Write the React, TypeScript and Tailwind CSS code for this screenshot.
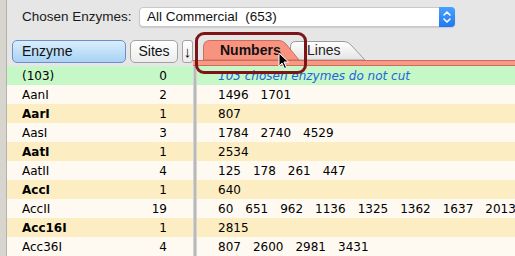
import React from "react";

type Row = { name: string; sites: string; nums: string[]; bold?: boolean; kind: "g" | "c" | "t"; note?: string };

const rows: Row[] = [
  { name: "(103)", sites: "0", nums: [], kind: "g", note: "103 chosen enzymes do not cut" },
  { name: "AanI", sites: "2", nums: ["1496", "1701"], kind: "c" },
  { name: "AarI", sites: "1", nums: ["807"], kind: "t", bold: true },
  { name: "AasI", sites: "3", nums: ["1784", "2740", "4529"], kind: "c" },
  { name: "AatI", sites: "1", nums: ["2534"], kind: "t", bold: true },
  { name: "AatII", sites: "4", nums: ["125", "178", "261", "447"], kind: "c" },
  { name: "AccI", sites: "1", nums: ["640"], kind: "t", bold: true },
  { name: "AccII", sites: "19", nums: ["60", "651", "962", "1136", "1325", "1362", "1637", "2013"], kind: "c" },
  { name: "Acc16I", sites: "1", nums: ["2815"], kind: "t", bold: true },
  { name: "Acc36I", sites: "4", nums: ["807", "2600", "2981", "3431"], kind: "c" },
];

const bg = (k: Row["kind"]) => (k === "g" ? "bg-[#c6f7c6]" : k === "c" ? "bg-[#fffaf1]" : "bg-[#fdedc2]");

export default function App() {
  return (
    <div className="relative w-[515px] h-[256px] overflow-hidden flex bg-[#e6e6e6] font-['DejaVu_Sans',sans-serif] text-[12px] text-black">
      <div className="w-[6px] bg-[#d8d5cf] border-r border-[#b3b1ac] shrink-0" style={{ width: 7 }} />
      <div className="flex-1 flex flex-col min-w-0">
        {/* top bar */}
        <div className="h-[34px] flex items-center shrink-0">
          <span className="ml-[15px] w-[117px] font-['Liberation_Sans',sans-serif] text-[13.5px] text-[#1a1a1a] whitespace-nowrap">Chosen Enzymes:</span>
          <div className="w-[316px] h-[20px] bg-white rounded-[4px] border border-[#c9c9c9] flex items-center shadow-[0_1px_1px_rgba(0,0,0,0.12)]">
            <span className="ml-[7px] flex-1 font-['Liberation_Sans',sans-serif] text-[13.5px] text-[#111] whitespace-pre">All Commercial  (653)</span>
            <div className="w-[16px] h-[20px] -mr-px rounded-r-[4px] bg-gradient-to-b from-[#4aa0ff] to-[#1e78f0] flex items-center justify-center">
              <svg width="10" height="14" viewBox="0 0 10 14" fill="none" stroke="white" strokeWidth="1.6" strokeLinecap="round" strokeLinejoin="round">
                <path d="M2 5 L5 2 L8 5" />
                <path d="M2 9 L5 12 L8 9" />
              </svg>
            </div>
          </div>
        </div>
        {/* header row */}
        <div className="h-[32px] flex shrink-0">
          <div className="w-[186px] flex items-start pt-[6px] pl-[5px] gap-[4px] shrink-0 font-['Liberation_Sans',sans-serif] text-[14px]">
            <div className="w-[114px] h-[23px] rounded-[5px] border border-[#6d8ec9] bg-gradient-to-b from-[#d9eefc] to-[#a8d2f4] flex items-center pl-[9px] text-[#111]">Enzyme</div>
            <div className="w-[48px] h-[23px] rounded-[5px] border border-[#a3a3a3] bg-gradient-to-b from-[#ffffff] to-[#ececec] flex items-center justify-center text-[#111]">Sites</div>
            <div className="w-[11px] h-[23px] rounded-[3px] border border-[#a3a3a3] bg-gradient-to-b from-[#ffffff] to-[#ececec] flex items-center justify-center text-[15px] leading-none">↓</div>
          </div>
          <div className="flex-1 flex flex-col">
            <div className="flex-1 flex items-end pl-[10px]">
              <div className="relative z-10 w-[97px] h-[20px] flex items-center pl-[17px] font-['Liberation_Sans',sans-serif] font-bold text-[14px] text-[#111]">
                <svg className="absolute inset-0" width="97" height="20" viewBox="0 0 97 20">
                  <path d="M0.5 20 L0.5 7 Q0.5 0.5 7 0.5 L76 0.5 Q80 0.5 83 4 L96 20 Z" fill="#f8937f" stroke="#c8705f" />
                </svg>
                <span className="relative">Numbers</span>
              </div>
              <div className="relative -ml-[10px] w-[76px] h-[19px] flex items-center pl-[17px] font-['Liberation_Sans',sans-serif] text-[14px] text-[#222]">
                <svg className="absolute inset-0" width="76" height="19" viewBox="0 0 76 19">
                  <defs>
                    <linearGradient id="lg" x1="0" y1="0" x2="0" y2="1">
                      <stop offset="0" stopColor="#ffffff" />
                      <stop offset="1" stopColor="#e4e4e4" />
                    </linearGradient>
                  </defs>
                  <path d="M0.5 19 L0.5 6 Q0.5 0.5 6 0.5 L54 0.5 Q58 0.5 61 4 L75 19 Z" fill="url(#lg)" stroke="#9c9c9c" />
                </svg>
                <span className="relative">Lines</span>
              </div>
            </div>
            <div className="h-[6px] bg-[#f69a86] border-t border-[#cf6b5b] border-b border-[#9d9d9d]" />
          </div>
        </div>
        {/* body */}
        <div className="flex-1 flex">
          <div className="w-[186px] flex flex-col shrink-0">
            {rows.map((r) => (
              <div key={r.name} className={`h-[19px] flex items-center ${bg(r.kind)}`}>
                <span className={`ml-[15px] flex-1 ${r.bold ? "font-bold" : ""}`}>{r.name}</span>
                <span className="mr-[26px]">{r.sites}</span>
              </div>
            ))}
          </div>
          <div className="w-[4px] bg-[#b9b9b9] border-l border-[#d4d4d4] border-r border-[#9f9f9f] shrink-0" />
          <div className="flex-1 flex flex-col min-w-0">
            {rows.map((r) => (
              <div key={r.name} className={`h-[19px] flex items-center pl-[21px] whitespace-nowrap overflow-hidden ${bg(r.kind)}`}>
                {r.note ? (
                  <span className="italic text-[#2463dc]">{r.note}</span>
                ) : (
                  r.nums.map((n, i) => (
                    <span key={i} className="mr-[12px] shrink-0">{n}</span>
                  ))
                )}
              </div>
            ))}
          </div>
        </div>
      </div>
      {/* highlight */}
      <div className="absolute left-[195px] top-[32px] w-[112px] h-[42px] rounded-[9px] border-[3px] border-[#7d1518] z-20" />
      {/* cursor */}
      <svg className="absolute left-[278px] top-[52px] z-30" width="12" height="18" viewBox="0 0 12 18">
        <path d="M1 1 L1 14 L4 11 L6.5 16.5 L8.5 15.5 L6 10 L10.5 10 Z" fill="black" stroke="white" strokeWidth="1" strokeLinejoin="round" />
      </svg>
    </div>
  );
}
